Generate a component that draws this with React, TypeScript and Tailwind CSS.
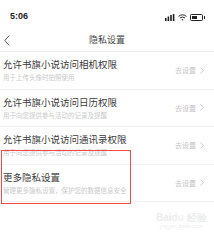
import React from 'react';

const rows = [
  { title: '允许书旗小说访问相机权限', sub: '用于上传头像时拍照使用' },
  { title: '允许书旗小说访问日历权限', sub: '用于向您提供参与活动的记录及提醒' },
  { title: '允许书旗小说访问通讯录权限', sub: '用于向您提供参与活动的记录及提醒' },
  { title: '更多隐私设置', sub: '管理更多隐私设置，保护您的数据信息安全' },
];

function Row({ title, sub }: { title: string; sub: string }) {
  return (
    <div className="h-[37.5px] flex items-center pl-[3px] pr-[10px] border-b border-[#f2f2f2]">
      <div className="flex-1 flex flex-col">
        <div className="text-[9.5px] leading-[12px] text-[#3a3a3a] whitespace-nowrap">{title}</div>
        <div className="text-[6.5px] leading-[9px] mt-[3px] text-[#cacaca] whitespace-nowrap">{sub}</div>
      </div>
      <div className="flex items-center gap-[4px] text-[7px] text-[#c4c4c4]">
        <span>去设置</span>
        <svg width="4" height="7" viewBox="0 0 4 7" fill="none" stroke="#c4c4c4" strokeWidth="0.9">
          <path d="M0.5 0.5 L3.3 3.5 L0.5 6.5" />
        </svg>
      </div>
    </div>
  );
}

export default function App() {
  return (
    <div className="w-[214px] h-[236px] bg-white overflow-hidden relative" style={{ fontFamily: '"Noto Sans CJK SC", "Liberation Sans", sans-serif' }}>
      {/* status bar */}
      <div className="h-[28px] flex items-center justify-between pl-[10px] pr-[9px] pt-[6px]">
        <span className="text-[9px] font-semibold text-[#222]" style={{ fontFamily: '"Liberation Sans", sans-serif' }}>5:06</span>
        <div className="flex items-center gap-[3px]">
          <svg width="10" height="7" viewBox="0 0 10 7" fill="#222">
            <rect x="0" y="4" width="1.6" height="3" />
            <rect x="2.6" y="2.5" width="1.6" height="4.5" />
            <rect x="5.2" y="1" width="1.6" height="6" />
            <rect x="7.8" y="0" width="1.6" height="7" />
          </svg>
          <svg width="9" height="7" viewBox="0 0 9 7" fill="none" stroke="#222" strokeWidth="1">
            <path d="M0.6 2.4 Q4.5 -0.8 8.4 2.4" />
            <path d="M2 4 Q4.5 2 7 4" />
            <circle cx="4.5" cy="5.8" r="0.8" fill="#222" stroke="none" />
          </svg>
          <div className="w-[13px] h-[7px] border border-[#222] rounded-[1.5px] p-[1px] flex">
            <div className="w-[5px] h-full bg-[#222]" />
          </div>
          <div className="w-[1px] h-[3px] bg-[#222] -ml-[2px]" />
        </div>
      </div>
      {/* nav bar */}
      <div className="h-[24px] relative flex items-center justify-center border-b border-[#ececec]">
        <svg className="absolute left-[4px] top-[7px]" width="6" height="11" viewBox="0 0 6 11" fill="none" stroke="#444" strokeWidth="0.9">
          <path d="M5.2 0.5 L0.8 5.5 L5.2 10.5" />
        </svg>
        <span className="text-[9px] text-[#444]">隐私设置</span>
      </div>
      {rows.map((r, i) => (
        <Row key={i} title={r.title} sub={r.sub} />
      ))}
      {/* highlight box */}
      <div className="absolute left-[1px] top-[150px] w-[130px] h-[54px] border-[1.5px] border-[#f24a4a]" />
      {/* watermark */}
      <div className="absolute left-[156px] top-[212px] flex flex-col items-center text-[#ededed]">
        <span className="text-[10px] font-bold leading-[11px]" style={{ fontFamily: '"Liberation Sans", sans-serif' }}>Bai<span className="text-[#f0f0f0]">du</span> 经验</span>
        <span className="text-[5px] leading-[6px]">jingyan.baidu.com</span>
      </div>
    </div>
  );
}
